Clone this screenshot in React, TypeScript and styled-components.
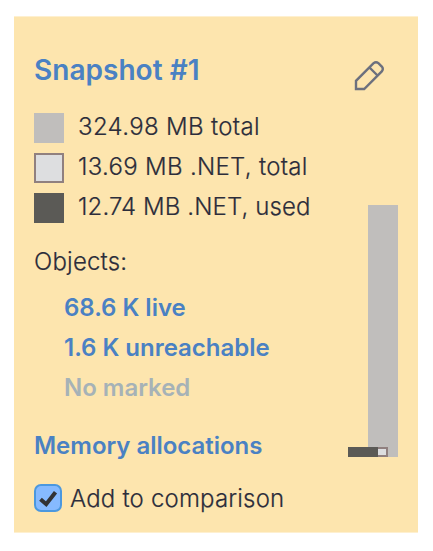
import React, { useState } from "react";
import styled, { createGlobalStyle } from "styled-components";

const GlobalStyle = createGlobalStyle`
  *, *::before, *::after { box-sizing: border-box; }
  body {
    margin: 0;
    background: #fff;
    color: #2c2d3b;
    font-family: "Inter", sans-serif;
    font-size: 24px;
    font-weight: 300;
  }
`;

const Card = styled.section`
  display: grid;
  grid-template-columns: 1fr 50px;
  width: 404px;
  height: 517px;
  margin: 16px 0 0 14px;
  padding: 0 20px;
  background: #fde5ae;
  border-top: 1px solid #fef0d0;
  border-bottom: 1px solid #fef0d0;
`;

const Details = styled.div`
  display: flex;
  flex-direction: column;
  align-items: flex-start;
  white-space: nowrap;
`;

const Title = styled.h1`
  margin: 33px 0 17px;
  font-size: 28px;
  font-weight: 600;
  line-height: 40px;
  letter-spacing: 0.03px;
  color: #4a81c3;
`;

const Legend = styled.ul`
  margin: 0;
  padding: 0;
  list-style: none;
`;

const LegendRow = styled.li<{ $spacing: number }>`
  display: flex;
  align-items: flex-start;
  gap: 14px;
  height: 40px;
  line-height: 40px;
  letter-spacing: ${(p) => p.$spacing}px;
  -webkit-text-stroke: 0.2px currentColor;
`;

const Swatch = styled.span<{ $color: string; $outline?: string }>`
  width: 30px;
  height: 30px;
  margin-top: 6px;
  background: ${(p) => p.$color};
  border: ${(p) => (p.$outline ? `2px solid ${p.$outline}` : "none")};
`;

const Label = styled.div`
  margin-top: 15px;
  line-height: 40px;
  letter-spacing: 0.2px;
  -webkit-text-stroke: 0.2px currentColor;
`;

const Links = styled.div`
  display: flex;
  flex-direction: column;
  align-items: flex-start;
  margin: 6px 0 18px 30px;
`;

const TextLink = styled.a<{ $muted?: boolean }>`
  font-weight: 600;
  line-height: 40px;
  letter-spacing: -0.02px;
  color: ${(p) => (p.$muted ? "#a6b2b7" : "#4a81c3")};
`;

const CheckRow = styled.label`
  display: flex;
  align-items: center;
  gap: 8px;
  height: 40px;
  margin-top: 12px;
`;

const HiddenInput = styled.input`
  position: absolute;
  opacity: 0;
  pointer-events: none;
`;

const CheckBox = styled.span`
  display: flex;
  width: 28px;
  height: 28px;
  background: #86baff;
  border: 2px solid #4b98df;
  border-radius: 7px;
`;

const CheckText = styled.span`
  letter-spacing: 0.18px;
  -webkit-text-stroke: 0.2px currentColor;
`;

const Side = styled.aside`
  display: flex;
  flex-direction: column;
  align-items: flex-end;
`;

const EditButton = styled.button`
  display: flex;
  margin: 42px 13px 0 0;
  padding: 0;
  border: 0;
  background: none;
`;

const Chart = styled.div`
  position: relative;
  width: 50px;
  height: 252px;
  margin-top: 112px;
`;

const TotalBar = styled.div`
  width: 30px;
  height: 252px;
  margin-left: 20px;
  background: #c0bebc;
`;

const NetBar = styled.div`
  position: absolute;
  left: 10px;
  bottom: 0;
  width: 30px;
  height: 10px;
  background: #dddee0;
  border: 2px solid #90807f;
`;

const UsedBar = styled.div`
  position: absolute;
  left: 0;
  bottom: 0;
  width: 30px;
  height: 10px;
  background: #5b5a56;
`;

const legend = [
  { text: "324.98 MB total", color: "#c0bebc", spacing: 0.34 },
  { text: "13.69 MB .NET, total", color: "#dddee0", outline: "#90807f", spacing: 0.3 },
  { text: "12.74 MB .NET, used", color: "#5b5a56", spacing: 0.1 },
];

function PencilIcon() {
  return (
    <svg width="34" height="34" viewBox="0 0 34 34" fill="none" stroke="#6c707e" strokeWidth="2.4" strokeLinejoin="miter">
      <path d="M5 30V21.8L22.6 4.2Q25 2.2 27.4 4.2L30.8 7.6Q32.8 10 30.8 12.4L13.2 30ZM18.5 8.5L26.5 16.5" />
    </svg>
  );
}

export default function App() {
  const [checked, setChecked] = useState(true);
  return (
    <>
      <GlobalStyle />
      <Card>
        <Details>
          <Title>Snapshot #1</Title>
          <Legend>
            {legend.map((item) => (
              <LegendRow key={item.text} $spacing={item.spacing}>
                <Swatch $color={item.color} $outline={item.outline} />
                <span>{item.text}</span>
              </LegendRow>
            ))}
          </Legend>
          <Label>Objects:</Label>
          <Links>
            <TextLink>68.6 K live</TextLink>
            <TextLink>1.6 K unreachable</TextLink>
            <TextLink $muted>No marked</TextLink>
          </Links>
          <TextLink>Memory allocations</TextLink>
          <CheckRow>
            <HiddenInput type="checkbox" checked={checked} onChange={(e) => setChecked(e.target.checked)} />
            <CheckBox>
              {checked && (
                <svg width="24" height="24" viewBox="0 0 24 24" fill="none" stroke="#323335" strokeWidth="4">
                  <path d="M4.5 13.2L10.2 18.2L19.5 6.2" />
                </svg>
              )}
            </CheckBox>
            <CheckText>Add to comparison</CheckText>
          </CheckRow>
        </Details>
        <Side>
          <EditButton aria-label="Edit">
            <PencilIcon />
          </EditButton>
          <Chart>
            <TotalBar />
            <NetBar />
            <UsedBar />
          </Chart>
        </Side>
      </Card>
    </>
  );
}
